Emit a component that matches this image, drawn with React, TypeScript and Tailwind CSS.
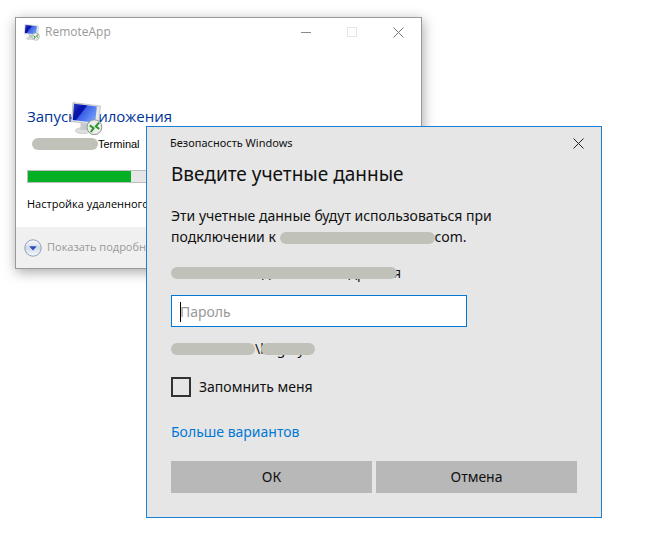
import { ReactNode } from "react";
import clsx from "clsx";

interface RedactedProps {
  className?: string;
  children?: ReactNode;
}

// Text with a rounded grey marker painted over it
const Redacted = ({ className, children }: RedactedProps) => (
  <span className={clsx("relative inline-flex items-center whitespace-nowrap", className)}>
    {children}
    <span className="absolute inset-x-0 top-1/2 h-3 -translate-y-1/2 rounded-full bg-[#c0c2ba]" />
  </span>
);

const RemoteIcon = ({ id, className }: { id: string; className: string }) => (
  <svg viewBox="0 0 32 34" className={className} aria-hidden="true">
    <defs>
      <linearGradient id={`${id}-screen`} x1="0" y1="0" x2="1" y2="0.6">
        <stop offset="0" stopColor="#2a48d0" />
        <stop offset="0.3" stopColor="#0a15ac" />
        <stop offset="0.46" stopColor="#0a15ac" />
        <stop offset="0.5" stopColor="#3a5fe6" />
        <stop offset="1" stopColor="#6f9af8" />
      </linearGradient>
      <linearGradient id={`${id}-frame`} x1="0" y1="0" x2="1" y2="1">
        <stop offset="0" stopColor="#d8dad8" />
        <stop offset="1" stopColor="#eceeed" />
      </linearGradient>
    </defs>
    <ellipse cx="12" cy="28.6" rx="7.6" ry="3" fill="#dcdfde" stroke="#b9bcbb" strokeWidth="0.6" />
    <path d="M9.5 21l7.5 1v6h-7.5z" fill="#c6caca" />
    <path d="M2 .6L29.4 4l-1.8 18.8L.6 19.6z" fill={`url(#${id}-frame)`} stroke="#b0b4b4" strokeWidth="0.7" />
    <path d="M3 1.8l22.8 2.8-1.6 16.2L1.8 18z" fill={`url(#${id}-screen)`} />
    <circle cx="23.4" cy="25.2" r="7.4" fill="#eceeec" stroke="#8f9391" strokeWidth="1" />
    <path d="M18.8 23.4l3.8 2.8-2.8 3.8M28 20.6l-3.2 3.8 3.4 2.6" fill="none" stroke="#2b962b" strokeWidth="2" />
  </svg>
);

const CloseIcon = () => (
  <svg viewBox="0 0 11 11" className="size-[11px]" stroke="currentColor" aria-hidden="true">
    <path d="M.5.5l10 10M10.5.5l-10 10" fill="none" />
  </svg>
);

const RemoteAppWindow = () => (
  <section className="absolute top-[17px] left-[15px] flex w-[407px] flex-col border border-[#999] bg-white font-['Open_Sans',sans-serif] shadow-[1px_3px_12px_rgba(0,0,0,0.35)]">
    <header className="flex h-7 items-center pl-2 text-[#999]">
      <RemoteIcon id="small" className="h-[17px] w-4" />
      <h1 className="ml-[5px] flex-1 text-xs">RemoteApp</h1>
      <button aria-label="Свернуть" className="flex h-7 w-[46px] items-center justify-center">
        <span className="h-px w-[10px] bg-[#8a8a8a]" />
      </button>
      <button aria-label="Развернуть" disabled className="flex h-7 w-[46px] items-center justify-center">
        <span className="size-[10px] border border-[#e4e4e4]" />
      </button>
      <button aria-label="Закрыть" className="flex h-7 w-[46px] items-center justify-center text-[#777]">
        <CloseIcon />
      </button>
    </header>
    <div className="px-[11px] pt-[60px]">
      <div className="relative">
        <h2 className="text-[15px] leading-5 text-[#003399]">Запуск приложения</h2>
        <RemoteIcon id="large" className="absolute -top-1 left-11 h-[34px] w-8" />
      </div>
      <p className="mt-[10px] flex h-4 items-center pl-[5px] font-['Liberation_Sans',sans-serif] text-[11px] text-black">
        <Redacted className="h-3 w-[66px]" />
        Terminal
      </p>
      <div
        role="progressbar"
        aria-label="Запуск"
        aria-valuenow={27}
        className="mt-[18px] h-[13px] border border-[#bcbcbc] bg-[#e6e6e6]"
      >
        <div className="h-full bg-[#06b025]" style={{ width: "27%" }} />
      </div>
      <p className="mt-[13px] text-[11px] leading-4">Настройка удаленного сеанса...</p>
    </div>
    <footer className="mt-[15px] flex h-[41px] items-center bg-[#f0f0f0] px-2">
      <button className="flex items-center gap-[5px] text-[11px] text-[#999]">
        <svg viewBox="0 0 18 18" className="size-[18px]" aria-hidden="true">
          <defs>
            <linearGradient id="expander" x1="0" y1="0" x2="0" y2="1">
              <stop offset="0" stopColor="#fdfdfd" />
              <stop offset="0.5" stopColor="#d3dae6" />
              <stop offset="1" stopColor="#f7fafd" />
            </linearGradient>
          </defs>
          <circle cx="9" cy="9" r="8.2" fill="url(#expander)" stroke="#8fa0ba" />
          <path d="M5.2 7.2h7.6L9 11.6z" fill="#2c4fc0" />
        </svg>
        Показать подробности
      </button>
    </footer>
  </section>
);

const CredentialsDialog = () => (
  <section
    role="dialog"
    aria-labelledby="credentials-title"
    className="absolute top-[126px] left-[146px] w-[456px] border border-[#1a80d4] bg-[#e6e6e6] text-[#111]"
  >
    <header className="flex h-8 items-center justify-between pl-[23px]">
      <span className="text-[11px]">Безопасность Windows</span>
      <button aria-label="Закрыть" className="flex h-8 w-[46px] items-center justify-center text-[#222]">
        <CloseIcon />
      </button>
    </header>
    <form className="px-6 pb-6" onSubmit={(e) => e.preventDefault()}>
      <h2 id="credentials-title" className="text-[19px] leading-[30px]">
        Введите учетные данные
      </h2>
      <p className="mt-4 text-sm leading-[21px]">
        Эти учетные данные будут использоваться при
        <br />
        подключении к <Redacted className="h-3 w-[155px] align-middle" />
        com.
      </p>
      <div className="mt-4 flex h-5 items-center text-sm">
        <Redacted className="h-5 w-[226px]">
          <span className="w-[91px]" />д<span className="w-[78px]" />
          др
        </Redacted>
        <span className="-ml-1">я</span>
      </div>
      <div className="relative mt-3 w-[296px]">
        <input
          type="password"
          aria-label="Пароль"
          placeholder="Пароль"
          className="block h-8 w-full border border-[#0078d7] bg-white px-2 text-sm caret-transparent outline-none placeholder:text-[#999]"
        />
        <span className="absolute top-[7px] left-[9px] h-5 w-px bg-black" />
      </div>
      <div className="mt-3 flex h-5 items-center text-sm">
        <Redacted className="h-5 w-[84px]" />
        \b
        <Redacted className="-ml-2 h-5 w-[54px]">
          <span className="w-4" />g<span className="w-3" />y
        </Redacted>
      </div>
      <label className="mt-[18px] flex w-fit items-center gap-2 text-sm leading-5">
        <input type="checkbox" className="size-5 appearance-none border-2 border-[#333] checked:bg-[#0078d7]" />
        Запомнить меня
      </label>
      <a href="#" className="mt-6 block w-fit text-sm leading-[22px] text-[#0078d7]">
        Больше вариантов
      </a>
      <div className="mt-[18px] grid grid-cols-2 gap-1">
        <button type="submit" className="h-8 bg-[#b8b8b8] text-sm">
          ОК
        </button>
        <button type="button" className="h-8 bg-[#b8b8b8] text-sm">
          Отмена
        </button>
      </div>
    </form>
  </section>
);

const App = () => {
  return (
    <main className="relative min-h-screen overflow-hidden bg-white font-['Noto_Sans',sans-serif] text-black">
      <RemoteAppWindow />
      <CredentialsDialog />
    </main>
  );
};

export default App;
